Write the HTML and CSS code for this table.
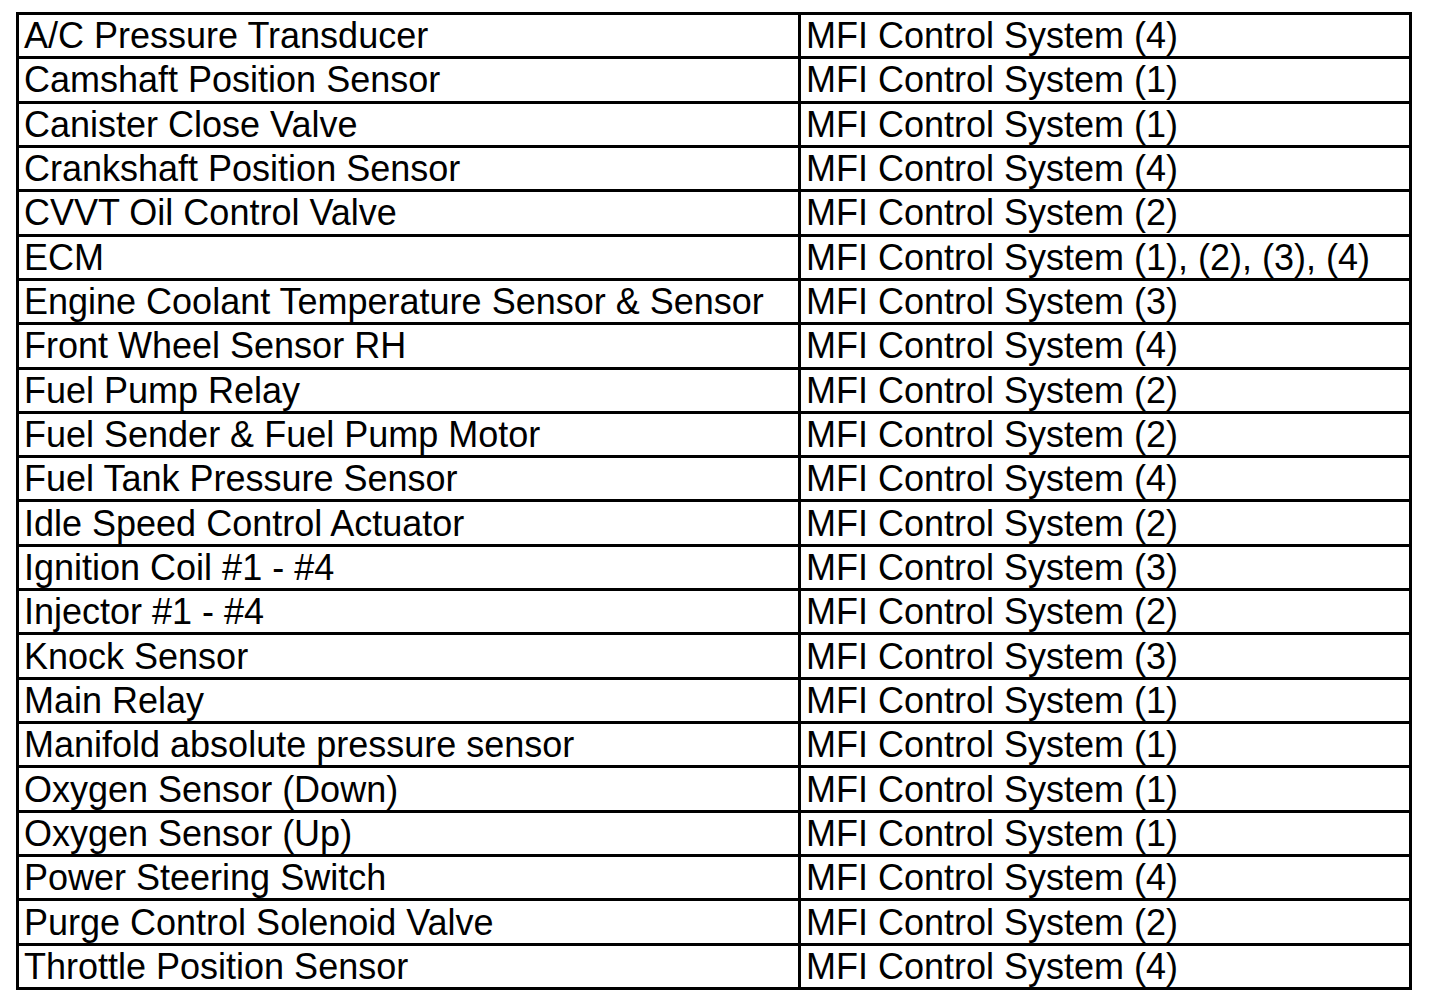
FILE: index.html
```html
<!DOCTYPE html>
<html>
<head>
<meta charset="utf-8">
<link rel="stylesheet" href="styles.css">
</head>
<body>
<div class="table">
<div class="cell">A/C Pressure Transducer</div><div class="cell">MFI Control System (4)</div>
<div class="cell">Camshaft Position Sensor</div><div class="cell">MFI Control System (1)</div>
<div class="cell">Canister Close Valve</div><div class="cell">MFI Control System (1)</div>
<div class="cell">Crankshaft Position Sensor</div><div class="cell">MFI Control System (4)</div>
<div class="cell">CVVT Oil Control Valve</div><div class="cell">MFI Control System (2)</div>
<div class="cell">ECM</div><div class="cell">MFI Control System (1), (2), (3), (4)</div>
<div class="cell">Engine Coolant Temperature Sensor &amp; Sensor</div><div class="cell">MFI Control System (3)</div>
<div class="cell">Front Wheel Sensor RH</div><div class="cell">MFI Control System (4)</div>
<div class="cell">Fuel Pump Relay</div><div class="cell">MFI Control System (2)</div>
<div class="cell">Fuel Sender &amp; Fuel Pump Motor</div><div class="cell">MFI Control System (2)</div>
<div class="cell">Fuel Tank Pressure Sensor</div><div class="cell">MFI Control System (4)</div>
<div class="cell">Idle Speed Control Actuator</div><div class="cell">MFI Control System (2)</div>
<div class="cell">Ignition Coil #1 - #4</div><div class="cell">MFI Control System (3)</div>
<div class="cell">Injector #1 - #4</div><div class="cell">MFI Control System (2)</div>
<div class="cell">Knock Sensor</div><div class="cell">MFI Control System (3)</div>
<div class="cell">Main Relay</div><div class="cell">MFI Control System (1)</div>
<div class="cell">Manifold absolute pressure sensor</div><div class="cell">MFI Control System (1)</div>
<div class="cell">Oxygen Sensor (Down)</div><div class="cell">MFI Control System (1)</div>
<div class="cell">Oxygen Sensor (Up)</div><div class="cell">MFI Control System (1)</div>
<div class="cell">Power Steering Switch</div><div class="cell">MFI Control System (4)</div>
<div class="cell">Purge Control Solenoid Valve</div><div class="cell">MFI Control System (2)</div>
<div class="cell">Throttle Position Sensor</div><div class="cell">MFI Control System (4)</div>
</div>
</body>
</html>
```
FILE: styles.css
```css
html, body {
  margin: 0;
  padding: 0;
  background: #fff;
}
.table {
  margin: 12px 0 0 16px;
  width: 1396px;
  height: 978px;
  box-sizing: border-box;
  border: 3px solid #000;
  background: #000;
  display: grid;
  grid-template-columns: 779px 608px;
  grid-template-rows: repeat(22, 1fr);
  gap: 3px;
}
.cell {
  background: #fff;
  font-family: "Liberation Sans", Arial, sans-serif;
  font-size: 36px;
  line-height: 1;
  color: #000;
  padding-left: 5px;
  padding-top: 1px;
  display: flex;
  align-items: center;
  white-space: nowrap;
}
```
